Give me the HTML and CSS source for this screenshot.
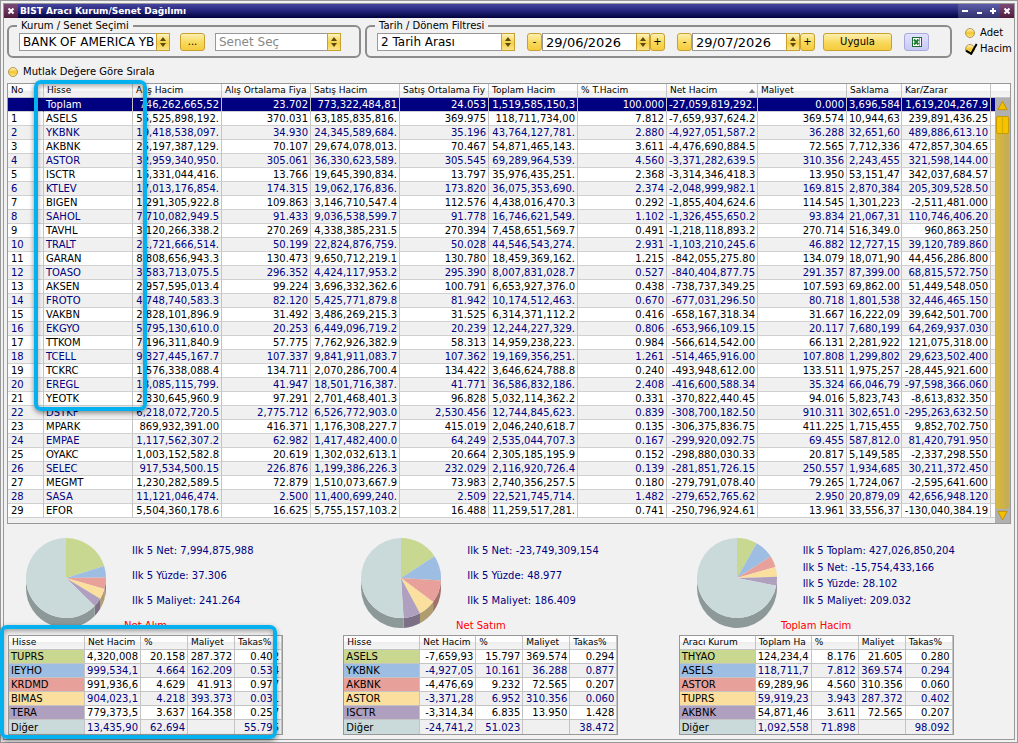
FILE: index.html
```
<!DOCTYPE html>
<html lang="tr">
<head>
<meta charset="UTF-8" />
<meta name="viewport" content="width=device-width, initial-scale=1" />
<title>BIST Aracı Kurum/Senet Dağılımı</title>
<link rel="stylesheet" href="styles.css">
</head>
<body>

<div class="window">
  <div class="frame">

    <header class="titlebar">
      <button class="win-btn close" aria-label="Kapat"><svg viewBox="0 0 14 14"><path d="M4.5 4.5l5 5M9.5 4.5l-5 5"/></svg></button>
      <h1>BIST Aracı Kurum/Senet Dağılımı</h1>
      <button class="win-btn" aria-label="Gizle"><svg viewBox="0 0 14 14"><path d="M4 7h6"/></svg></button>
      <button class="win-btn" aria-label="Küçült"><svg viewBox="0 0 14 14"><path d="M5 9h5"/></svg></button>
      <button class="win-btn" aria-label="Büyüt"><svg viewBox="0 0 14 14"><path d="M4 7h6M7 4v6"/></svg></button>
      <button class="win-btn close" aria-label="Kapat"><svg viewBox="0 0 14 14"><path d="M4.5 4.5l5 5M9.5 4.5l-5 5"/></svg></button>
    </header>

    <form class="toolbar">
      <fieldset>
        <legend>Kurum / Senet Seçimi</legend>
        <div class="controls">
          <span class="combo wide">
            <select aria-label="Kurum"><option>BANK OF AMERICA YB</option></select>
            <span class="spin"><svg viewBox="0 0 12 16"><path d="M6 3l3 4H3zM6 13l3-4H3z"/></svg></span>
          </span>
          <button type="button" class="btn more">...</button>
          <span class="combo senet">
            <input type="text" placeholder="Senet Seç" aria-label="Senet">
            <span class="spin"><svg viewBox="0 0 12 16"><path d="M6 3l3 4H3zM6 13l3-4H3z"/></svg></span>
          </span>
        </div>
      </fieldset>

      <fieldset class="dates">
        <legend>Tarih / Dönem Filtresi</legend>
        <div class="controls">
          <span class="combo period">
            <select aria-label="Dönem"><option>2 Tarih Arası</option></select>
            <span class="spin"><svg viewBox="0 0 12 16"><path d="M6 3l3 4H3zM6 13l3-4H3z"/></svg></span>
          </span>
          <span class="stepper">
            <button type="button" class="btn step">-</button>
            <span class="combo date">
              <input type="text" value="29/06/2026" aria-label="Başlangıç">
              <span class="spin"><svg viewBox="0 0 12 16"><path d="M6 3l3 4H3zM6 13l3-4H3z"/></svg></span>
            </span>
            <button type="button" class="btn step">+</button>
          </span>
          <span class="stepper">
            <button type="button" class="btn step">-</button>
            <span class="combo date">
              <input type="text" value="29/07/2026" aria-label="Bitiş">
              <span class="spin"><svg viewBox="0 0 12 16"><path d="M6 3l3 4H3zM6 13l3-4H3z"/></svg></span>
            </span>
            <button type="button" class="btn step">+</button>
          </span>
          <button type="button" class="btn apply">Uygula</button>
          <button type="button" class="btn excel" aria-label="Excel">
            <svg viewBox="0 0 12 12"><rect x="1.5" y="1.5" width="9" height="9" fill="#fff" stroke="#1d6b32"/><path d="M8.5 2v8" stroke="#7db48a"/><path d="M3 3.5l4.5 5M7.5 3.5L3 8.5" stroke="#1d7a38" stroke-width="2"/></svg>
          </button>
        </div>
      </fieldset>

      <div class="modes">
        <label><input type="radio" name="mode" class="dot"> Adet</label>
        <label><input type="radio" name="mode" class="dot" checked> Hacim</label>
      </div>
    </form>

    <label class="sort-abs"><input type="checkbox" class="dot"> Mutlak Değere Göre Sırala</label>

    <div class="grid">
      <table class="main" id="mainTable">
        <colgroup>
          <col class="c-no"><col class="c-std"><col class="c-std"><col class="c-std"><col class="c-std"><col class="c-std">
          <col class="c-std"><col class="c-std"><col class="c-net"><col class="c-std"><col class="c-sak"><col class="c-std"><col>
        </colgroup>
        <thead>
          <tr>
            <th>No</th><th>Hisse</th><th>Alış Hacim</th><th>Alış Ortalama Fiya</th><th>Satış Hacim</th><th>Satış Ortalama Fiy</th>
            <th>Toplam Hacim</th><th>% T.Hacim</th><th class="sorted">Net Hacim</th><th>Maliyet</th><th>Saklama</th><th>Kar/Zarar</th><th></th>
          </tr>
        </thead>
        <tbody></tbody>
      </table>
      <div class="scroll">
        <div class="scroll-head"></div>
        <div class="arrow"><svg viewBox="0 0 16 14"><path d="M8 3l5 9H3z"/></svg></div>
        <div class="track"><div class="thumb"></div></div>
        <div class="arrow"><svg viewBox="0 0 16 14"><path d="M8 11L3 2h10z"/></svg></div>
      </div>
      <div class="mark mark-hisse"></div>
    </div>

    <div class="panels" id="panels"></div>

  </div>
  <div class="mark mark-alim"></div>
</div>

<script src="script.js"></script>
</body>
</html>
```
FILE: styles.css
```
/* General styling */
* {
  box-sizing: border-box;
}

body {
  margin: 0;
  background: #f1f1f1;
  color: #000;
  font-family: Verdana, 'DejaVu Sans', sans-serif;
  font-size: 10px;
  line-height: 12px;
}

button, input, select {
  font: inherit;
  color: inherit;
  margin: 0;
}

.window {
  position: relative;
  display: flex;
  min-height: 100vh;
  padding: 2px;
  border: 1px solid #999;
}

.frame {
  flex: 1;
  min-width: 0;
  border: 1px solid #999;
}

/* Title bar */
.titlebar {
  display: flex;
  height: 14px;
  background: linear-gradient(#4646a0, #23237a 50%, #00003c);
  color: #fff;
}

.titlebar h1 {
  flex: 1;
  margin: 0;
  padding-left: 2px;
  font-size: 9px;
  line-height: 14px;
}

.win-btn {
  width: 14px;
  height: 14px;
  padding: 0;
  border: 0;
  background: linear-gradient(#5c5caa, #30306a);
}

.win-btn.close {
  background: linear-gradient(#7c4878, #501c3c);
}

.win-btn svg {
  display: block;
  fill: none;
  stroke: #fff;
  stroke-width: 2;
}

/* Toolbar */
.toolbar {
  display: flex;
  align-items: flex-start;
  padding: 2px 0 0 3px;
}

fieldset {
  flex-shrink: 0;
  min-width: 0;
  margin: 0 4px 0 0;
  padding: 1px 18px 5px 10px;
  border: 2px solid #8c8c8c;
  border-radius: 6px;
}

.dates {
  padding-right: 21px;
}

legend {
  padding: 0 4px;
  margin-left: -2px;
}

.controls {
  display: flex;
  gap: 10px;
}

.dates .controls {
  gap: 12px;
}

.combo {
  display: flex;
  height: 18px;
  border: 1px solid #999;
  background: #fff;
  font-size: 12px;
}

.combo select,
.combo input {
  flex: 1;
  min-width: 0;
  width: 0;
  padding: 0 0 0 3px;
  border: 0;
  background: none;
  appearance: none;
  outline: none;
}

.combo input::placeholder {
  color: #888;
}

.wide { width: 151px; }
.senet { width: 126px; }
.period { width: 138px; }

.date {
  width: 108px;
  font-size: 13px;
}

.spin {
  width: 14px;
  margin: -1px;
  border: 1px solid #c8a030;
  background: linear-gradient(#fdf3c0, #f5cf45 55%, #f9e48c);
}

.spin svg {
  display: block;
  width: 12px;
  height: 16px;
  fill: #5a4a10;
}

.stepper {
  display: flex;
}

.btn {
  height: 18px;
  padding: 0;
  border: 1px solid #c8a030;
  border-radius: 3px;
  background: linear-gradient(#fdf0b0, #f8d858 55%, #f5cc40);
}

.step { width: 15px; }
.more { width: 25px; }

.apply {
  width: 69px;
  margin-left: -4px;
}

.excel {
  width: 25px;
  border-color: #a8a8dc;
  background: linear-gradient(#e2e2ff, #c8c8f4);
}

.excel svg {
  display: block;
  width: 12px;
  margin: 0 auto;
  fill: none;
}

.modes {
  display: flex;
  flex-direction: column;
  gap: 4px;
  margin: 7px 0 0 9px;
}

.modes label,
.sort-abs {
  display: flex;
  align-items: center;
  gap: 5px;
}

.sort-abs {
  padding: 8px 4px 5px;
}

/* Yellow round tick boxes and radios */
.dot {
  appearance: none;
  position: relative;
  flex-shrink: 0;
  width: 10px;
  height: 10px;
  border: 1px solid #b8964a;
  border-radius: 50%;
  background: linear-gradient(#fff4c0, #f3c62c 50%, #fae48a);
}

.dot:checked::after {
  content: "";
  position: absolute;
  left: 2px;
  top: -3px;
  width: 5px;
  height: 10px;
  border: solid #000;
  border-width: 0 2px 2px 0;
  transform: rotate(30deg);
}

/* Tables */
table {
  border-collapse: separate;
  border-spacing: 0;
  table-layout: fixed;
}

th, td {
  height: 14px;
  padding: 0 2px;
  border-right: 1px solid #c4c4c4;
  border-bottom: 1px solid #d0d0d0;
  overflow: hidden;
  white-space: nowrap;
  text-align: right;
  line-height: 13px;
}

th {
  padding: 0 0 0 3px;
  border-color: #c4c4c4;
  background: linear-gradient(#fdfdfd 50%, #eee 50%, #f4f4f4);
  font-size: 9px;
  font-weight: normal;
  text-align: left;
}

tbody tr {
  background: #fff;
}

tbody tr.alt {
  background: #f0f0f0;
  color: #000080;
}

.grid {
  position: relative;
  display: flex;
  margin: 0 3px;
  border: 1px solid #999;
}

.main {
  flex: 1;
  min-width: 0;
  width: 0;
  margin-bottom: 5px;
}

.c-no { width: 36px; }
.c-std { width: 89px; }
.c-net { width: 91px; }
.c-sak { width: 55px; }

.main td:first-child,
.main td:nth-child(2) {
  text-align: left;
}

.main td:first-child {
  padding-left: 3px;
}

.main th:last-child,
.main td:last-child {
  padding: 0;
  border-right: 0;
}

.main tr.total {
  background: #000080;
  color: #fff;
}

.main tr.total td:first-child {
  border-right-color: #000080;
}

.sorted::after {
  content: "";
  float: right;
  margin: 5px 2px 0 0;
  border: 3px solid transparent;
  border-top: 0;
  border-bottom: 4px solid #777;
}

.scroll {
  display: flex;
  flex-direction: column;
  width: 15px;
  background: #b0b0b0;
}

.scroll-head {
  height: 14px;
  border-bottom: 1px solid #c4c4c4;
  background: linear-gradient(#fdfdfd 50%, #eee 50%, #f4f4f4);
}

.arrow svg {
  display: block;
  width: 15px;
  height: 14px;
  fill: #f3c000;
  stroke: #c09000;
}

.track {
  flex: 1;
  margin: 4px 1px 0;
  border-radius: 2px;
  background: linear-gradient(90deg, #d8b83c, #c4ac58);
}

.thumb {
  height: 18px;
  border: 1px solid #c89c00;
  border-radius: 2px;
  background: linear-gradient(90deg, #f4c400 40%, #d8ac00 50%, #f4c400 60%);
}

/* Callout frames */
.mark {
  position: absolute;
  border: 4px solid #05b0ee;
  border-radius: 7px;
  box-shadow: 0 2px 5px rgba(0, 0, 0, 0.45), inset 0 2px 5px rgba(0, 0, 0, 0.35);
  pointer-events: none;
}

.mark-hisse {
  left: 26px;
  top: -4px;
  width: 113px;
  height: 331px;
}

.mark-alim {
  left: -1px;
  bottom: 3px;
  width: 277px;
  height: 114px;
}

/* Bottom panels */
.panels {
  display: grid;
  grid-template-columns: repeat(3, 1fr);
  padding: 14px 0 4px 4px;
}

.panel h2 {
  width: 275px;
  margin: 0 0 3px;
  font-size: 10px;
  font-weight: normal;
  text-align: center;
  color: #f00;
}

.chart {
  display: flex;
  height: 82px;
}

.pie {
  width: 80px;
  height: 90px;
  margin: 0 26px 0 18px;
}

.stats {
  display: flex;
  flex-direction: column;
  justify-content: space-between;
  height: 62px;
  margin: 7px 0 0;
  padding: 0;
  list-style: none;
  color: #000080;
}

.mini {
  width: 275px;
  border: 1px solid #999;
}

.mini td {
  border-color: #c4c4c4;
}

.mini td:first-child {
  text-align: left;
  color: #000;
}

.mini tr:last-child td {
  border-bottom: 0;
}

.c-name { width: 76px; }
.c-vol { width: 56px; }

.s0 { background: #c8d890; fill: #c8d890; }
.s1 { background: #9dbee2; fill: #9dbee2; }
.s2 { background: #e8a09a; fill: #e8a09a; }
.s3 { background: #fadf9e; fill: #fadf9e; }
.s4 { background: #b0a0c0; fill: #b0a0c0; }
.s5 { background: #cadada; fill: #cadada; }

.side {
  filter: brightness(0.7);
}
```
FILE: script.js
```
// No, Hisse, Alış Hacim, Alış Ort., Satış Hacim, Satış Ort., Toplam Hacim, % T.Hacim, Net Hacim, Maliyet, Saklama, Kar/Zarar
const rows = `
|Toplam|746,262,665,52|23.702|773,322,484,81|24.053|1,519,585,150,3|100.000|-27,059,819,292.|0.000|3,696,584|1,619,204,267.9
1|ASELS|55,525,898,192.|370.031|63,185,835,816.|369.975|118,711,734,00|7.812|-7,659,937,624.2|369.574|10,944,63|239,891,436.25
2|YKBNK|19,418,538,097.|34.930|24,345,589,684.|35.196|43,764,127,781.|2.880|-4,927,051,587.2|36.288|32,651,60|489,886,613.10
3|AKBNK|25,197,387,129.|70.107|29,674,078,013.|70.467|54,871,465,143.|3.611|-4,476,690,884.5|72.565|7,712,336|472,857,304.65
4|ASTOR|32,959,340,950.|305.061|36,330,623,589.|305.545|69,289,964,539.|4.560|-3,371,282,639.5|310.356|2,243,455|321,598,144.00
5|ISCTR|16,331,044,416.|13.766|19,645,390,834.|13.797|35,976,435,251.|2.368|-3,314,346,418.3|13.950|53,151,47|342,037,684.57
6|KTLEV|17,013,176,854.|174.315|19,062,176,836.|173.820|36,075,353,690.|2.374|-2,048,999,982.1|169.815|2,870,384|205,309,528.50
7|BIGEN|1,291,305,922.8|109.863|3,146,710,547.4|112.576|4,438,016,470.3|0.292|-1,855,404,624.6|114.545|1,301,223|-2,511,481.000
8|SAHOL|7,710,082,949.5|91.433|9,036,538,599.7|91.778|16,746,621,549.|1.102|-1,326,455,650.2|93.834|21,067,31|110,746,406.20
9|TAVHL|3,120,266,338.2|270.269|4,338,385,231.5|270.394|7,458,651,569.7|0.491|-1,218,118,893.2|270.714|516,349.0|960,863.250
10|TRALT|21,721,666,514.|50.199|22,824,876,759.|50.028|44,546,543,274.|2.931|-1,103,210,245.6|46.882|12,727,15|39,120,789.860
11|GARAN|8,808,656,943.3|130.473|9,650,712,219.1|130.780|18,459,369,162.|1.215|-842,055,275.80|134.079|18,071,90|44,456,286.800
12|TOASO|3,583,713,075.5|296.352|4,424,117,953.2|295.390|8,007,831,028.7|0.527|-840,404,877.75|291.357|87,399.00|68,815,572.750
13|AKSEN|2,957,595,013.4|99.224|3,696,332,362.6|100.791|6,653,927,376.0|0.438|-738,737,349.25|107.593|69,862.00|51,449,548.050
14|FROTO|4,748,740,583.3|82.120|5,425,771,879.8|81.942|10,174,512,463.|0.670|-677,031,296.50|80.718|1,801,538|32,446,465.150
15|VAKBN|2,828,101,896.9|31.492|3,486,269,215.3|31.525|6,314,371,112.2|0.416|-658,167,318.34|31.667|16,222,09|39,642,501.700
16|EKGYO|5,795,130,610.0|20.253|6,449,096,719.2|20.239|12,244,227,329.|0.806|-653,966,109.15|20.117|7,680,199|64,269,937.030
17|TTKOM|7,196,311,840.9|57.775|7,762,926,382.9|58.313|14,959,238,223.|0.984|-566,614,542.00|66.131|2,281,922|121,075,318.00
18|TCELL|9,327,445,167.7|107.337|9,841,911,083.7|107.362|19,169,356,251.|1.261|-514,465,916.00|107.808|1,299,802|29,623,502.400
19|TCKRC|1,576,338,088.4|134.711|2,070,286,700.4|134.422|3,646,624,788.8|0.240|-493,948,612.00|133.511|1,975,257|-28,445,921.600
20|EREGL|18,085,115,799.|41.947|18,501,716,387.|41.771|36,586,832,186.|2.408|-416,600,588.34|35.324|66,046,79|-97,598,366.060
21|YEOTK|2,330,645,960.9|97.291|2,701,468,401.3|96.828|5,032,114,362.2|0.331|-370,822,440.45|94.016|5,823,743|-8,613,832.350
22|DSTKF|6,218,072,720.5|2,775.712|6,526,772,903.0|2,530.456|12,744,845,623.|0.839|-308,700,182.50|910.311|302,651.0|-295,263,632.50
23|MPARK|869,932,391.00|416.371|1,176,308,227.7|415.019|2,046,240,618.7|0.135|-306,375,836.75|411.225|1,715,455|9,852,702.750
24|EMPAE|1,117,562,307.2|62.982|1,417,482,400.0|64.249|2,535,044,707.3|0.167|-299,920,092.75|69.455|587,812.0|81,420,791.950
25|OYAKC|1,003,152,582.8|20.619|1,302,032,613.1|20.664|2,305,185,195.9|0.152|-298,880,030.33|20.817|5,149,585|-2,337,298.550
26|SELEC|917,534,500.15|226.876|1,199,386,226.3|232.029|2,116,920,726.4|0.139|-281,851,726.15|250.557|1,934,685|30,211,372.450
27|MEGMT|1,230,282,589.5|72.879|1,510,073,667.9|73.983|2,740,356,257.5|0.180|-279,791,078.40|79.265|1,724,067|-2,595,641.600
28|SASA|11,121,046,474.|2.500|11,400,699,240.|2.509|22,521,745,714.|1.482|-279,652,765.62|2.950|20,879,09|42,656,948.120
29|EFOR|5,504,360,178.6|16.625|5,755,157,103.2|16.488|11,259,517,281.|0.741|-250,796,924.61|13.961|33,556,37|-130,040,384.19
`.trim().split('\n');

const panels = [
  {
    title: 'Net Alım',
    stats: ['Ilk 5 Net: 7,994,875,988', 'Ilk 5 Yüzde: 37.306', 'Ilk 5 Maliyet: 241.264'],
    head: ['Hisse', 'Net Hacim', '%', 'Maliyet', 'Takas%'],
    rows: [
      ['TUPRS', '4,320,008', '20.158', '287.372', '0.402'],
      ['IEYHO', '999,534,1', '4.664', '162.209', '0.534'],
      ['KRDMD', '991,936,6', '4.629', '41.913', '0.977'],
      ['BIMAS', '904,023,1', '4.218', '393.373', '0.031'],
      ['TERA', '779,373,5', '3.637', '164.358', '0.257'],
      ['Diğer', '13,435,90', '62.694', '', '55.795']
    ]
  },
  {
    title: 'Net Satım',
    stats: ['Ilk 5 Net: -23,749,309,154', 'Ilk 5 Yüzde: 48.977', 'Ilk 5 Maliyet: 186.409'],
    head: ['Hisse', 'Net Hacim', '%', 'Maliyet', 'Takas%'],
    rows: [
      ['ASELS', '-7,659,93', '15.797', '369.574', '0.294'],
      ['YKBNK', '-4,927,05', '10.161', '36.288', '0.877'],
      ['AKBNK', '-4,476,69', '9.232', '72.565', '0.207'],
      ['ASTOR', '-3,371,28', '6.952', '310.356', '0.060'],
      ['ISCTR', '-3,314,34', '6.835', '13.950', '1.428'],
      ['Diğer', '-24,741,2', '51.023', '', '38.472']
    ]
  },
  {
    title: 'Toplam Hacim',
    stats: ['Ilk 5 Toplam: 427,026,850,204', 'Ilk 5 Net: -15,754,433,166', 'Ilk 5 Yüzde: 28.102', 'Ilk 5 Maliyet: 209.032'],
    head: ['Aracı Kurum', 'Toplam Ha', '%', 'Maliyet', 'Takas%'],
    rows: [
      ['THYAO', '124,234,4', '8.176', '21.605', '0.280'],
      ['ASELS', '118,711,7', '7.812', '369.574', '0.294'],
      ['ASTOR', '69,289,96', '4.560', '310.356', '0.060'],
      ['TUPRS', '59,919,23', '3.943', '287.372', '0.402'],
      ['AKBNK', '54,871,46', '3.611', '72.565', '0.207'],
      ['Diğer', '1,092,558', '71.898', '', '98.092']
    ]
  }
];

document.querySelector('#mainTable tbody').innerHTML = rows.map((line, i) => {
  const cls = i === 0 ? 'total' : (i % 2 === 0 ? 'alt' : '');
  const cells = line.split('|').map(c => `<td>${c}</td>`).join('');
  return `<tr class="${cls}">${cells}<td></td></tr>`;
}).join('');

function point(share) {
  const a = share * 2 * Math.PI;
  return [(40 + 40 * Math.sin(a)).toFixed(2), (40 - 40 * Math.cos(a)).toFixed(2)];
}

function drawPie(values) {
  let start = 0, sides = '', tops = '';
  values.forEach((v, i) => {
    const end = start + v / 100;
    const [x1, y1] = point(start);
    const [x2, y2] = point(end);
    const large = end - start > 0.5 ? 1 : 0;
    tops += `<path class="s${i}" d="M40 40L${x1} ${y1}A40 40 0 ${large} 1 ${x2} ${y2}Z"/>`;

    // only the front half of the rim is visible
    const from = Math.max(start, 0.25), to = Math.min(end, 0.75);
    if (to > from) {
      const [ax, ay] = point(from);
      const [bx, by] = point(to);
      sides += `<path class="s${i} side" d="M${ax} ${ay}A40 40 0 0 1 ${bx} ${by}v10A40 40 0 0 0 ${ax} ${+ay + 10}Z"/>`;
    }
    start = end;
  });
  return `<svg class="pie" viewBox="0 0 80 90">${sides}${tops}</svg>`;
}

document.getElementById('panels').innerHTML = panels.map(p => `
  <section class="panel">
    <div class="chart">
      ${drawPie(p.rows.map(r => parseFloat(r[2])))}
      <ul class="stats">${p.stats.map(s => `<li>${s}</li>`).join('')}</ul>
    </div>
    <h2>${p.title}</h2>
    <table class="mini">
      <colgroup><col class="c-name"><col class="c-vol"><col><col><col></colgroup>
      <thead><tr>${p.head.map(h => `<th>${h}</th>`).join('')}</tr></thead>
      <tbody>${p.rows.map((r, i) => `<tr class="${i % 2 ? 'alt' : ''}"><td class="s${i}">${r[0]}</td>${r.slice(1).map(c => `<td>${c}</td>`).join('')}</tr>`).join('')}</tbody>
    </table>
  </section>`).join('');
```
